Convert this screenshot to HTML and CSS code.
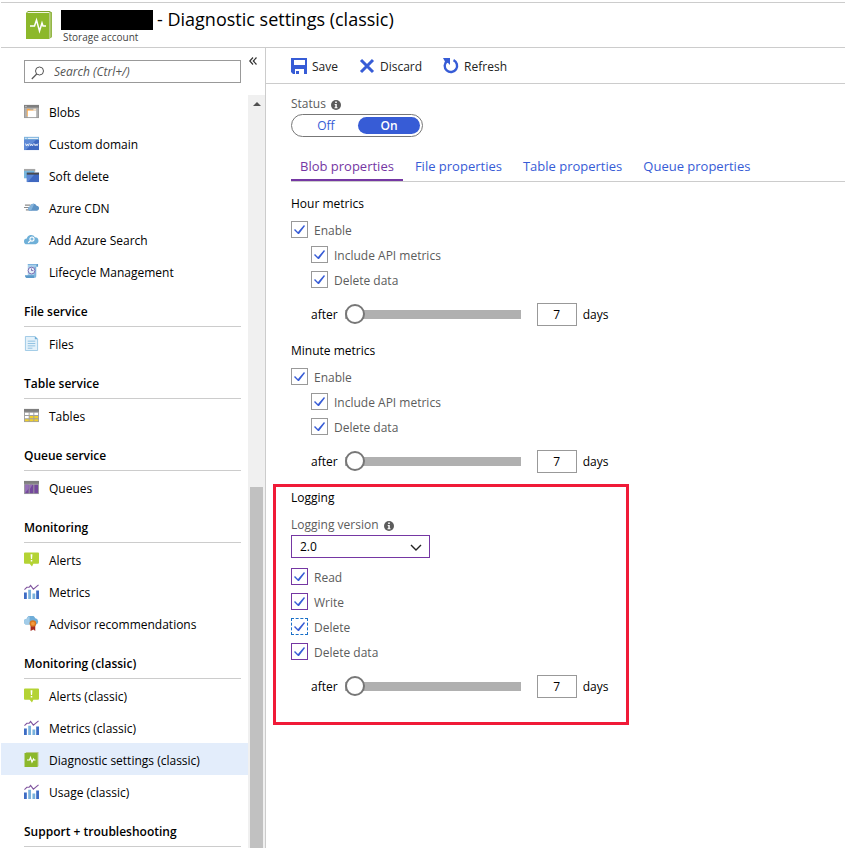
FILE: index.html
```html
<!DOCTYPE html>
<html lang="en">
<head>
<meta charset="utf-8">
<meta name="viewport" content="width=device-width, initial-scale=1">
<title>Diagnostic settings (classic)</title>
<link rel="stylesheet" href="styles.css">
</head>
<body>
<svg class="sprite" aria-hidden="true">
  <symbol id="i-diagnostic" viewBox="0 0 26 28">
    <path fill="#7fa52c" d="M2 0h21.500L26 1.500V26l-3 2V2H0z"/>
    <path fill="#eef4dc" d="M2 1h21.500v26.500H23V2H1z"/>
    <path fill="#a9c765" d="M24 1.500h1.500V26L24 27z"/>
    <path fill="#8cb82b" d="M0 2h23v26H0z"/>
    <path fill="none" stroke="#fff" stroke-width="1.500" d="M4 15h4.500l2-6 3 11 2.500-8 1 3h3"/>
  </symbol>
  <symbol id="i-diag-small" viewBox="0 0 14 15">
    <path fill="#b9c98a" d="M1 0h13v14l-1 1z"/>
    <path fill="#8cb82b" d="M0 1h13v14H0z"/>
    <path fill="none" stroke="#fff" stroke-width="1.200" d="M2.500 8H5l1-2.500L7.500 10 9 7l.5 1H11"/>
  </symbol>
  <symbol id="i-blob" viewBox="0 0 16 14">
    <path fill="#9b9b9b" d="M0 0h16v14H0z"/><path fill="#7f7f7f" d="M0 0h16v3H0z"/>
    <path fill="#c4c4c4" d="M1 1h2v1H1z"/><path fill="#b0b0b0" d="M1 3h14v10H1z"/>
    <path fill="#f5a64b" d="M3 4h3l1 1h3v7H3z"/><path fill="#fff" d="M4 6h9v7H4z"/><path fill="#fbe3c4" d="M10 4h3v2h-3z"/>
  </symbol>
  <symbol id="i-domain" viewBox="0 0 16 14">
    <path fill="#3f68c0" d="M0 0h16v14H0z"/><path fill="#5f8ad6" d="M0 3h13L2 14H0z"/>
    <path fill="#7db3dd" d="M0 0h16v3H0z"/><path fill="#fff" d="M4 1h11v1H4z"/><path fill="#d9ecf8" d="M1 1h2v1H1z"/>
    <path fill="none" stroke="#fff" stroke-width=".8" d="m1.500 7 1 2.500 1-2 1 2 1-2.500m.7 0 1 2.500 1-2 1 2 1-2.500m.7 0 1 2.500 1-2 1 2 1-2.500"/>
  </symbol>
  <symbol id="i-soft" viewBox="0 0 16 14">
    <path fill="#a7a7a7" d="M0 0h12v3H0z"/><path fill="#79b7dc" d="M0 2h11v8H0z"/>
    <path fill="#3f68c0" d="M3 4h13v10H3z"/><path fill="#5b87d5" d="M3 6h8l-7 8H3z"/><path fill="#4c4c4c" d="M3 4h13v2H3z"/>
  </symbol>
  <symbol id="i-cdn" viewBox="0 0 16 10">
    <path stroke="#8a8a8a" stroke-width="1.200" d="M1 2.500h6M0 5h7M2 7.500h6"/>
    <path fill="#5d93c5" d="M6 8.500a2.300 2.300 0 0 1 .5-4.500A3.800 3.800 0 0 1 13.500 3 2.800 2.800 0 0 1 14 8.500z"/><path fill="#84b3db" d="M6 8.500a2.300 2.300 0 0 1 .5-4.500A3.800 3.800 0 0 1 11 1L7.500 8.500z"/>
  </symbol>
  <symbol id="i-search-cloud" viewBox="0 0 16 12">
    <path fill="#6fb0d8" d="M3 11a3 3 0 0 1 0-6 4.700 4.700 0 0 1 8.700-1.500A3.800 3.800 0 0 1 12.500 11z"/>
    <circle cx="8.500" cy="5.500" r="2.200" fill="#7fb9dd" stroke="#fff" stroke-width="1.200"/><path stroke="#fff" stroke-width="1.400" d="M7 7.200 4.500 9.500"/>
  </symbol>
  <symbol id="i-lifecycle" viewBox="0 0 16 16">
    <path fill="#a9cfea" d="M4 1h9v13H4z"/><path fill="#5b9aca" d="M13 0h2v3h-2zM1 12h10v3H2.500Q1 15 1 12z"/><path fill="#7db3dd" d="M4 0h9v1H4zM11 3h2v9q0 3-2 3z"/>
    <circle cx="8" cy="7" r="3.600" fill="#e6f1fa" stroke="#7b68ae"/><path fill="none" stroke="#7b68ae" d="M8 4.800V7h2"/>
  </symbol>
  <symbol id="i-file" viewBox="0 0 15 16">
    <path fill="#e3f1fa" stroke="#9cc7e4" d="M1 .5h10l3 3v12H1z"/><path fill="#6faed8" d="M11 0l3.500 3.500H11z"/>
    <path stroke="#8dbfe0" d="M3.500 5.500h8M3.500 8h8M3.500 10.500h8M3.500 13h5"/>
  </symbol>
  <symbol id="i-table" viewBox="0 0 16 14">
    <path fill="#a0a0a0" d="M0 0h16v14H0z"/><path fill="#7f7f7f" d="M0 0h16v3H0z"/>
    <path fill="#fff" d="M1 4h4v2.500H1zM6 4h4v2.500H6zM11 4h4v2.500h-4zM1 7.500h4V10H1z"/>
    <path fill="#f0cf2b" d="M6 7.500h4V10H6zM11 7.500h4V10h-4zM1 11h4v2H1zM6 11h4v2H6zM11 11h4v2h-4z"/>
  </symbol>
  <symbol id="i-queue" viewBox="0 0 16 14">
    <path fill="#a0a0a0" d="M0 0h16v14H0z"/><path fill="#7f7f7f" d="M0 0h16v3H0z"/>
    <path fill="#74489c" d="M1 4h4v9H1zM6 4h4v9H6zM11 4h4v9h-4z"/><path fill="#9670b8" d="M1 4h4v4l-4 5zM6 4h3L6 9z"/>
  </symbol>
  <symbol id="i-alert" viewBox="0 0 16 15">
    <path fill="#b4d334" d="M1 0h14q1 0 1 1v10q0 1-1 1h-5l-1.500 3L6 12H1q-1 0-1-1V1q0-1 1-1z"/><path fill="#fff" d="M7 2h2l-.4 5H7.400zM7.200 8h1.600v1.600H7.200z"/>
  </symbol>
  <symbol id="i-metrics" viewBox="0 0 16 16">
    <path fill="#3d6cc4" d="M0 9h3v7H0zM13 7h3v9h-3z"/><path fill="#79b2dc" d="M4.500 6h3v10h-3zM9 10h3v6H9z"/>
    <path fill="none" stroke="#80559f" stroke-width="1.200" d="M.5 6 3 3.500h2.500l1.500-2 3 4L15.500 1"/>
  </symbol>
  <symbol id="i-advisor" viewBox="0 0 16 16">
    <path fill="#6fadd8" d="M3 9a3 3 0 0 1 0-6 4.700 4.700 0 0 1 9-.5A3.400 3.400 0 0 1 13 9z"/><path fill="#a2cce8" d="M3 9a3 3 0 0 1 0-6 4.500 4.500 0 0 1 3-2.800L6 9z"/>
    <path fill="#a72b1f" d="M7 10h5v6l-2-1.500L7 16z"/><circle cx="9.500" cy="8" r="3.500" fill="#d9771f"/><circle cx="9.500" cy="8" r="2" fill="#f39a3e"/>
  </symbol>
  <symbol id="i-info" viewBox="0 0 10 10">
    <circle cx="5" cy="5" r="5" fill="#5c5c5c"/><path fill="#fff" d="M4.200 1.500h1.600V3H4.200zM3.700 4h2.100v3.300h.7v1h-3v-1h.8V5h-.6z"/>
  </symbol>
</svg>

<div class="portal">
  <header class="header">
    <svg class="header-icon" aria-hidden="true"><use href="#i-diagnostic"/></svg>
    <div class="header-text">
      <h1 class="title"><span class="redacted"></span>- Diagnostic settings (classic)</h1>
      <p class="subtitle">Storage account</p>
    </div>
  </header>

  <div class="body">
    <aside class="sidebar">
      <div class="search-row">
        <label class="search">
          <svg class="search-icon" viewBox="0 0 14 14" aria-hidden="true"><circle cx="8.500" cy="5" r="4" fill="none" stroke="#555"/><path stroke="#555" stroke-width="1.200" d="M5.700 8 .8 13"/></svg>
          <input class="search-input" type="search" placeholder="Search (Ctrl+/)" aria-label="Search (Ctrl+/)">
        </label>
        <button class="collapse" aria-label="Collapse menu"><svg viewBox="0 0 8 8" aria-hidden="true"><path fill="none" stroke="#333" stroke-width="1.200" d="M4 .5.800 4 4 7.500M7.500.5 4.300 4l3.200 3.500"/></svg></button>
      </div>
      <div class="menu">
        <nav class="nav">
          <a class="nav-item" href="#"><svg><use href="#i-blob"/></svg>Blobs</a>
          <a class="nav-item" href="#"><svg><use href="#i-domain"/></svg>Custom domain</a>
          <a class="nav-item" href="#"><svg><use href="#i-soft"/></svg>Soft delete</a>
          <a class="nav-item" href="#"><svg><use href="#i-cdn"/></svg>Azure CDN</a>
          <a class="nav-item" href="#"><svg><use href="#i-search-cloud"/></svg>Add Azure Search</a>
          <a class="nav-item" href="#"><svg><use href="#i-lifecycle"/></svg>Lifecycle Management</a>
          <h2 class="nav-heading">File service</h2>
          <a class="nav-item" href="#"><svg><use href="#i-file"/></svg>Files</a>
          <h2 class="nav-heading">Table service</h2>
          <a class="nav-item" href="#"><svg><use href="#i-table"/></svg>Tables</a>
          <h2 class="nav-heading">Queue service</h2>
          <a class="nav-item" href="#"><svg><use href="#i-queue"/></svg>Queues</a>
          <h2 class="nav-heading">Monitoring</h2>
          <a class="nav-item" href="#"><svg><use href="#i-alert"/></svg>Alerts</a>
          <a class="nav-item" href="#"><svg><use href="#i-metrics"/></svg>Metrics</a>
          <a class="nav-item" href="#"><svg><use href="#i-advisor"/></svg>Advisor recommendations</a>
          <h2 class="nav-heading">Monitoring (classic)</h2>
          <a class="nav-item" href="#"><svg><use href="#i-alert"/></svg>Alerts (classic)</a>
          <a class="nav-item" href="#"><svg><use href="#i-metrics"/></svg>Metrics (classic)</a>
          <a class="nav-item selected" href="#" aria-current="page"><svg><use href="#i-diag-small"/></svg>Diagnostic settings (classic)</a>
          <a class="nav-item" href="#"><svg><use href="#i-metrics"/></svg>Usage (classic)</a>
          <h2 class="nav-heading">Support + troubleshooting</h2>
        </nav>
        <div class="scrollbar" aria-hidden="true"><span class="scroll-up"></span><span class="scroll-thumb"></span></div>
      </div>
    </aside>

    <main class="main">
      <div class="toolbar">
        <button class="command"><svg viewBox="0 0 16 16" aria-hidden="true"><path fill="#375cd6" fill-rule="evenodd" d="M0 0h16v16h-3v-5H4v5H2l-2-2zM3 2v5h11V2zM5 13h3v3H5z"/></svg>Save</button>
        <button class="command"><svg viewBox="0 0 16 16" aria-hidden="true"><path fill="none" stroke="#375cd6" stroke-width="3" d="m2 2 12 12M14 2 2 14"/></svg>Discard</button>
        <button class="command"><svg viewBox="0 0 16 16" aria-hidden="true"><path fill="none" stroke="#375cd6" stroke-width="2.400" d="M10.500 2.200a6.200 6.200 0 1 1-6.500.8"/><path fill="#375cd6" d="M0 0h7v7L4.800 4.700 3 5.500z"/></svg>Refresh</button>
      </div>

      <div class="content">
        <div class="field-label">Status <svg aria-hidden="true"><use href="#i-info"/></svg></div>
        <div class="toggle" role="group" aria-label="Status">
          <button class="toggle-option" aria-pressed="false">Off</button>
          <button class="toggle-option on" aria-pressed="true">On</button>
        </div>

        <div class="tabs" role="tablist">
          <button class="tab active" role="tab" aria-selected="true">Blob properties</button>
          <button class="tab" role="tab">File properties</button>
          <button class="tab" role="tab">Table properties</button>
          <button class="tab" role="tab">Queue properties</button>
        </div>

        <section class="group">
          <h2 class="group-title">Hour metrics</h2>
          <label class="check"><input type="checkbox" checked>Enable</label>
          <label class="check nested"><input type="checkbox" checked>Include API metrics</label>
          <label class="check nested"><input type="checkbox" checked>Delete data</label>
          <div class="retention">
            <label for="hour-range">after</label>
            <input class="range" id="hour-range" type="range" min="1" max="365" value="1">
            <input class="days" id="hour-days" type="text" value="7">
            <label for="hour-days">days</label>
          </div>
        </section>

        <section class="group">
          <h2 class="group-title">Minute metrics</h2>
          <label class="check"><input type="checkbox" checked>Enable</label>
          <label class="check nested"><input type="checkbox" checked>Include API metrics</label>
          <label class="check nested"><input type="checkbox" checked>Delete data</label>
          <div class="retention">
            <label for="minute-range">after</label>
            <input class="range" id="minute-range" type="range" min="1" max="365" value="1">
            <input class="days" id="minute-days" type="text" value="7">
            <label for="minute-days">days</label>
          </div>
        </section>

        <section class="group highlighted">
          <h2 class="group-title">Logging</h2>
          <label class="field-label" for="version">Logging version <svg aria-hidden="true"><use href="#i-info"/></svg></label>
          <div class="select">
            <select id="version"><option>2.0</option><option>1.0</option></select>
            <svg viewBox="0 0 12 7" aria-hidden="true"><path fill="none" stroke="#222" stroke-width="1.400" d="m1 1 5 5 5-5"/></svg>
          </div>
          <label class="check edited"><input type="checkbox" checked>Read</label>
          <label class="check edited"><input type="checkbox" checked>Write</label>
          <label class="check focused"><input type="checkbox" checked>Delete</label>
          <label class="check edited"><input type="checkbox" checked>Delete data</label>
          <div class="retention">
            <label for="log-range">after</label>
            <input class="range" id="log-range" type="range" min="1" max="365" value="1">
            <input class="days" id="log-days" type="text" value="7">
            <label for="log-days">days</label>
          </div>
        </section>
      </div>
    </main>
  </div>
</div>
</body>
</html>
```
FILE: styles.css
```css
:root {
  --blue: #375cd6;
  --purple: #7537a3;
  --line: #ccc;
  --border: #999;
  --muted: #5c5c5c;
}

* { box-sizing: border-box; }

body, h1, h2, p { margin: 0; }

body {
  background: #fff;
  color: #000;
  font: 12px/16px "Open Sans", "Noto Sans", sans-serif;
}

button, input, select {
  margin: 0;
  padding: 0;
  border: 0;
  background: none;
  color: inherit;
  font: inherit;
}

.sprite { position: absolute; width: 0; height: 0; }

.portal {
  display: flex;
  flex-direction: column;
  min-height: 100vh;
  padding: 2px 0 1px 1px;
}

/* Blade header */
.header {
  display: flex;
  gap: 9px;
  height: 46px;
  padding: 7px 25px 0;
  border-top: 1px solid var(--line);
  border-bottom: 1px solid var(--line);
}
.header-icon { width: 26px; height: 30px; }
.title {
  display: flex;
  gap: 4px;
  font-size: 18px;
  line-height: 18px;
  font-weight: 400;
}
.redacted { width: 92px; height: 20px; background: #000; }
.subtitle { padding-left: 2px; color: #444; font-size: 10px; line-height: 14px; }

.body { display: flex; flex: 1; }

/* Resource menu */
.sidebar {
  display: flex;
  flex-direction: column;
  flex: 0 0 265px;
  border-right: 1px solid var(--line);
}
.search-row { display: flex; gap: 8px; height: 47px; padding: 12px 0 0 23px; }
.search {
  display: flex;
  align-items: center;
  gap: 9px;
  width: 217px;
  height: 23px;
  padding-left: 6px;
  border: 1px solid var(--border);
}
.search-icon { width: 14px; height: 14px; margin-top: 2px; }
.search-input { flex: 1; min-width: 0; outline: 0; }
.search-input::placeholder { color: #555; font-style: italic; }
.collapse { width: 8px; height: 8px; margin-top: -3px; line-height: 0; }
.collapse svg { width: 8px; height: 8px; }

.menu { display: flex; flex: 1; }
.nav { flex: 1; }
.nav-item {
  display: flex;
  align-items: center;
  gap: 10px;
  height: 32px;
  padding: 4px 0 0 23px;
  color: #000;
  text-decoration: none;
}
.nav-item svg { width: 15px; height: 15px; margin-top: -4px; }
.nav-item.selected { background: #e3edfb; }
.nav-heading {
  height: 40px;
  margin: 0 7px 0 23px;
  padding-top: 17px;
  border-bottom: 1px solid var(--line);
  font-size: 12px;
  font-weight: 600;
}

.scrollbar {
  display: flex;
  flex-direction: column;
  align-items: center;
  width: 17px;
  background: #f0f0f0;
}
.scroll-up {
  margin: 7px 0 auto;
  border: 4px solid transparent;
  border-top: 0;
  border-bottom-color: #505050;
}
.scroll-thumb { width: 13px; height: 48%; background: #c1c1c1; }

/* Commands */
.main { flex: 1; min-width: 0; }
.toolbar {
  display: flex;
  gap: 21px;
  height: 36px;
  padding-left: 25px;
  border-bottom: 1px solid var(--line);
}
.command { display: flex; align-items: center; gap: 5px; padding-top: 2px; color: #222; }
.command svg { width: 16px; height: 16px; margin-top: -2px; }

/* Settings */
.content { padding: 12px 0 0 25px; }
.field-label {
  display: flex;
  align-items: flex-start;
  gap: 5px;
  height: 18px;
  color: var(--muted);
}
.field-label svg { width: 10px; height: 10px; margin-top: 4px; }

.toggle {
  display: flex;
  width: 132px;
  height: 23px;
  padding: 2px;
  border: 1px solid #777;
  border-radius: 12px;
}
.toggle-option { flex: 1; border-radius: 9px; color: var(--blue); }
.toggle-option.on { flex: 0 0 62px; background: var(--blue); color: #fff; font-weight: 600; }

.tabs {
  display: flex;
  gap: 3px;
  height: 45px;
  padding-top: 15px;
  border-bottom: 1px solid var(--line);
  font-size: 13px;
}
.tab { padding: 0 9px; border-bottom: 2px solid transparent; color: var(--blue); }
.tab.active { border-color: var(--purple); color: var(--purple); }

.group { height: 147px; padding-top: 14px; }
.group-title { height: 25px; font-size: 12px; font-weight: 400; }
.check {
  display: flex;
  gap: 6px;
  width: max-content;
  height: 17px;
  margin-bottom: 8px;
  color: var(--muted);
  line-height: 19px;
}
.check.nested { margin-left: 20px; }
.check input {
  appearance: none;
  width: 17px;
  height: 17px;
  border: 1px solid var(--border);
}
.check input:checked::before {
  content: "";
  display: block;
  width: 15px;
  height: 15px;
  background: var(--blue);
  clip-path: polygon(2px 8px, 3px 7px, 6px 10px, 12px 3px, 13px 4px, 7px 12px, 6px 12px);
}
.check.edited input { border-color: var(--purple); }
.check.focused input { border: 1px dashed #1a70c8; }

.retention { display: flex; align-items: center; height: 23px; margin: 15px 0 0 20px; }
.range {
  appearance: none;
  width: 176px;
  height: 20px;
  margin: 0 16px 0 7px;
}
.range::-webkit-slider-runnable-track { height: 9px; background: #b0b0b0; }
.range::-webkit-slider-thumb {
  appearance: none;
  width: 20px;
  height: 20px;
  margin-top: -6px;
  border: 2px solid #777;
  border-radius: 50%;
  background: #fff;
}
.days {
  width: 40px;
  height: 23px;
  margin-right: 6px;
  border: 1px solid var(--border);
  text-align: center;
}

.group.highlighted {
  width: 356px;
  height: auto;
  margin: 8px 0 0 -18px;
  padding: 3px 15px 24px;
  border: 3px solid #f01a38;
}
.highlighted .group-title { height: 27px; }
.select { position: relative; width: 139px; margin-bottom: 10px; }
.select select {
  appearance: none;
  width: 100%;
  height: 23px;
  padding-left: 8px;
  border: 1px solid var(--purple);
}
.select svg {
  position: absolute;
  top: 9px;
  right: 8px;
  width: 12px;
  height: 7px;
  pointer-events: none;
}
```
